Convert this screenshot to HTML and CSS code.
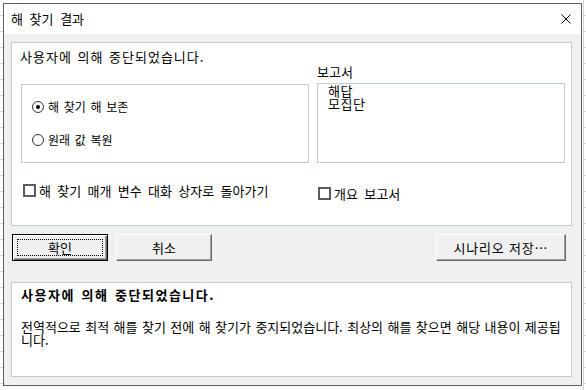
FILE: index.html
```html
<!DOCTYPE html>
<html lang="ko">
<head>
<meta charset="utf-8">
<title>해 찾기 결과</title>
<link rel="stylesheet" href="styles.css">
</head>
<body>
<div class="dialog">
  <div class="titlebar">
    <span class="title">해 찾기 결과</span>
    <svg class="close" width="10" height="10" viewBox="0 0 10 10"><path d="M0.5 0.5L9.5 9.5M9.5 0.5L0.5 9.5" stroke="#000" stroke-width="1" fill="none"/></svg>
  </div>
  <div class="content">
    <div class="panel top">
      <div class="msg">사용자에 의해 중단되었습니다.</div>
      <div class="grid">
        <div class="radiobox">
          <div class="radio"><span class="rb on"></span><span>해 찾기 해 보존</span></div>
          <div class="radio"><span class="rb"></span><span>원래 값 복원</span></div>
        </div>
        <div class="reports">
          <div class="rlabel">보고서</div>
          <div class="listbox">
            <div class="item">해답</div>
            <div class="item">모집단</div>
          </div>
        </div>
        <div class="check left"><span class="cb"></span><span>해 찾기 매개 변수 대화 상자로 돌아가기</span></div>
        <div class="check right"><span class="cb"></span><span>개요 보고서</span></div>
      </div>
    </div>
    <div class="buttons">
      <button class="btn default"><span class="focus">확인</span></button>
      <button class="btn">취소</button>
      <button class="btn wide">시나리오 저장…</button>
    </div>
    <div class="panel bottom">
      <div class="btitle">사용자에 의해 중단되었습니다.</div>
      <p class="desc">전역적으로 최적 해를 찾기 전에 해 찾기가 중지되었습니다. 최상의 해를 찾으면 해당 내용이 제공됩니다.</p>
    </div>
  </div>
</div>
</body>
</html>
```

FILE: styles.css
```css
html, body {
  margin: 0;
  padding: 0;
}
body {
  width: 586px;
  height: 390px;
  overflow: hidden;
  font-family: "Noto Sans CJK KR", "Noto Sans", sans-serif;
  font-size: 13px;
  color: #000;
  background-color: #fff;
  background-image:
    linear-gradient(to right, transparent 583px, #d4d4d4 583px, #d4d4d4 584px, transparent 584px),
    repeating-linear-gradient(to bottom, transparent 0, transparent 15px, #d4d4d4 15px, #d4d4d4 16px);
}
.dialog {
  margin: 3px 0 0 3px;
  width: 579px;
  height: 383px;
  box-sizing: border-box;
  border: 1px solid #5f5f5f;
  background: #f0f0f0;
  display: flex;
  flex-direction: column;
}
.titlebar {
  height: 29px;
  background: #fff;
  display: flex;
  align-items: center;
  justify-content: space-between;
  padding: 0 10px 1px 7px;
}
.title {
  font-size: 13px;
  line-height: 14px;
  word-spacing: 3px;
}
.close {
  display: block;
}
.content {
  flex: 1;
  padding: 8px 9px 0 7px;
  display: flex;
  flex-direction: column;
}
.panel {
  background: #fff;
  border: 1px solid #bfcddb;
  box-sizing: border-box;
}
.panel.top {
  height: 184px;
  padding: 0 6px 0 9px;
}
.msg {
  margin: 6px 0 0 -1px;
  line-height: 16px;
  letter-spacing: 1px;
  word-spacing: 1px;
}
.grid {
  display: grid;
  grid-template-columns: 288px 248px;
  column-gap: 8px;
  align-items: start;
}
.radiobox {
  margin-top: 19px;
  height: 79px;
  box-sizing: border-box;
  border: 1px solid #bfcddb;
  padding: 15px 0 0 10px;
  display: flex;
  flex-direction: column;
  gap: 19px;
}
.radio {
  display: flex;
  align-items: center;
  gap: 4px;
  height: 14px;
  font-size: 12px;
  line-height: 14px;
  word-spacing: 1.3px;
}
.rb {
  width: 12px;
  height: 12px;
  box-sizing: border-box;
  border: 1.5px solid #333;
  border-radius: 50%;
  background: #fff;
  display: flex;
  align-items: center;
  justify-content: center;
}
.rb.on::after {
  content: "";
  width: 4px;
  height: 4px;
  border-radius: 50%;
  background: #000;
}
.reports {
  margin-top: 0;
}
.rlabel {
  line-height: 14px;
}
.listbox {
  margin-top: 4px;
  height: 80px;
  box-sizing: border-box;
  border: 1px solid #bfcddb;
  padding: 0 10px;
}
.item {
  line-height: 13px;
  letter-spacing: 0.5px;
}
.check {
  display: flex;
  align-items: center;
  gap: 3px;
  height: 13px;
  line-height: 13px;
  word-spacing: 2.7px;
}
.check.left {
  margin: 21px 0 0 2px;
}
.check.right {
  margin: 24px 0 0 1px;
}
.cb {
  width: 13px;
  height: 13px;
  box-sizing: border-box;
  border: 2px solid #5c5c5c;
  background: #fff;
  flex: none;
}
.buttons {
  display: flex;
  gap: 8px;
  margin: 8px 0 0 1px;
  height: 27px;
}
.btn {
  font-family: inherit;
  font-size: 13px;
  color: #000;
  width: 96px;
  height: 27px;
  padding: 0;
  box-sizing: border-box;
  background: #f0f0f0;
  border: 1px solid;
  border-color: #fff #696969 #696969 #fff;
  box-shadow: inset -1px -1px 0 #a0a0a0;
  display: flex;
  align-items: center;
  justify-content: center;
  line-height: 14px;
}
.btn.default {
  border: 1px solid #000;
  box-shadow: inset 1px 1px 0 #fff, inset -1px -1px 0 #696969, inset -2px -2px 0 #a0a0a0;
}
.focus {
  display: flex;
  align-items: center;
  justify-content: center;
  width: 86px;
  height: 17px;
  border: 1px dotted #000;
  box-sizing: border-box;
}
.btn.wide {
  width: 130px;
  margin-left: auto;
  margin-right: 6px;
  letter-spacing: 0.8px;
}
.panel.bottom {
  margin-top: 21px;
  height: 95px;
  padding: 4px 3px 0 9px;
}
.btitle {
  font-weight: 700;
  line-height: 16px;
  letter-spacing: 1.5px;
  word-spacing: 1.5px;
}
.desc {
  margin: 17px 0 0 0;
  line-height: 13px;
  word-spacing: 0.8px;
}
```
